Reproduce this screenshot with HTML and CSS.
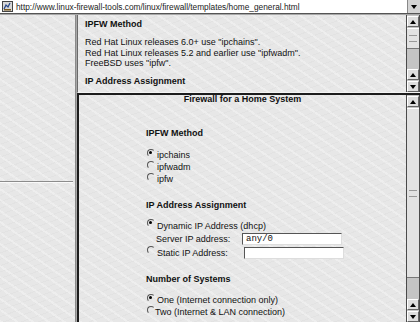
FILE: index.html
```html
<!DOCTYPE html>
<html lang="en">
<head>
  <meta charset="UTF-8" />
  <title>Firewall for a Home System</title>
  <link rel="stylesheet" href="styles.css">
</head>
<body>

  <div class="location">
    <span class="page-icon">
      <svg width="11" height="11" viewBox="0 0 11 11">
        <rect x="0.5" y="0.5" width="10" height="10" fill="#d8d8d8" stroke="#444"/>
        <path d="M2 8 L4 4 L6 6 L8 2" fill="none" stroke="#2a4a8a" stroke-width="1.3"/>
        <rect x="2" y="8" width="7" height="1.5" fill="#7a5a20"/>
      </svg>
    </span>
    <span class="url">http://www.linux-firewall-tools.com/linux/firewall/templates/home_general.html</span>
    <span class="drop"><span class="tri-down"></span></span>
  </div>

  <div class="frames">
    <div class="nav-frame">
      <div class="nav-top"></div>
      <div class="nav-rule"></div>
    </div>

    <div class="main-col">
      <div class="help-frame">
        <div class="help-body">
          <h3>IPFW Method</h3>
          <p>Red Hat Linux releases 6.0+ use "ipchains".<br>
             Red Hat Linux releases 5.2 and earlier use "ipfwadm".<br>
             FreeBSD uses "ipfw".</p>
          <h3>IP Address Assignment</h3>
        </div>
        <div class="scrollbar help-scroll">
          <div class="sbtn"><span class="tri-up"></span></div>
          <div class="thumb"><span class="grip"></span></div>
          <div class="track"></div>
          <div class="sbtn"><span class="tri-up"></span></div>
          <div class="sbtn"><span class="tri-down"></span></div>
        </div>
      </div>

      <div class="form-frame">
        <div class="form-body">
          <h2>Firewall for a Home System</h2>

          <div class="form-table">
            <h3 class="first">IPFW Method</h3>
            <div class="opts">
              <div class="row"><span class="radio on"></span>ipchains</div>
              <div class="row"><span class="radio"></span>ipfwadm</div>
              <div class="row"><span class="radio"></span>ipfw</div>
            </div>

            <h3>IP Address Assignment</h3>
            <div class="opts">
              <div class="row"><span class="radio on"></span>Dynamic IP Address (dhcp)</div>
              <div class="row field"><span class="lbl server">Server IP address:</span><span class="input">any/0</span></div>
              <div class="row field"><span class="radio"></span><span class="lbl static">Static IP Address:</span><span class="input"></span></div>
            </div>

            <h3>Number of Systems</h3>
            <div class="opts">
              <div class="row"><span class="radio on"></span>One (Internet connection only)</div>
              <div class="row"><span class="radio tight"></span>Two (Internet &amp; LAN connection)</div>
            </div>
          </div>
        </div>
        <div class="scrollbar form-scroll">
          <div class="sbtn"><span class="tri-up"></span></div>
          <div class="thumb"><span class="grip"></span></div>
          <div class="track"></div>
          <div class="sbtn"><span class="tri-up"></span></div>
          <div class="sbtn"><span class="tri-down"></span></div>
        </div>
      </div>
    </div>
  </div>

</body>
</html>
```

FILE: styles.css
```css
body {
  margin: 0;
  width: 420px;
  height: 322px;
  overflow: hidden;
  font-family: "Liberation Sans", Arial, sans-serif;
  font-size: 9px;
  color: #111;
  background: #a8a8a8;
}

/* marble-ish page background */
.nav-frame, .help-body, .form-body {
  background-color: #e7e7e7;
  background-image:
    repeating-linear-gradient(35deg, rgba(255,255,255,0.3) 0 2px, transparent 2px 9px),
    repeating-linear-gradient(-20deg, rgba(0,0,0,0.02) 0 1px, transparent 1px 6px);
}

.location {
  display: flex;
  align-items: center;
  height: 13px;
  background: #fff;
  border-bottom: 1px solid #555;
  margin-bottom: 1px;
}

.page-icon {
  width: 11px;
  height: 11px;
  margin: 0 3px 0 2px;
  display: flex;
}

.url {
  flex: 1;
  font-size: 8.3px;
  color: #222;
  white-space: nowrap;
}

.drop {
  width: 12px;
  height: 13px;
  background: #d4d4d4;
  border-left: 1px solid #888;
  display: flex;
  align-items: center;
  justify-content: center;
}

.frames {
  display: flex;
  height: 307px;
}

.nav-frame {
  width: 75px;
  border-right: 1px solid #8a8a8a;
  margin-right: 1px;
}

.nav-top {
  height: 166px;
}

.nav-rule {
  width: 73px;
  border-top: 1px solid #8c8c8c;
  border-bottom: 1px solid #fafafa;
}

.main-col {
  flex: 1;
  display: flex;
  flex-direction: column;
}

.help-frame {
  display: flex;
  height: 77px;
  border-left: 1px solid #6a6a6a;
  border-bottom: 1px solid #f4f4f4;
}

.help-body {
  flex: 1;
  padding: 4px 7px 0;
  line-height: 10.5px;
  overflow: hidden;
}

.help-body h3 {
  margin: 0;
  font-size: 9px;
}

.help-body p {
  margin: 7.5px 0;
}

.form-frame {
  flex: 1;
  display: flex;
  border-top: 2px solid #1c1c1c;
  border-left: 2px solid #1c1c1c;
}

.form-body {
  flex: 1;
  overflow: hidden;
}

.form-body h2 {
  margin: 0;
  font-size: 9px;
  line-height: 9px;
  text-align: center;
}

.form-table {
  padding-left: 67px;
}

.form-table h3 {
  margin: 14.5px 0 9px;
  font-size: 9px;
  line-height: 11px;
}

.form-table h3.first {
  margin-top: 23.5px;
  margin-bottom: 10.5px;
}

.row {
  display: flex;
  align-items: center;
  height: 12px;
  white-space: nowrap;
}

.row.field {
  height: 14px;
}

.radio {
  width: 6px;
  height: 6px;
  margin: -5px 2px 0 1px;
  border-radius: 50%;
  border-top: 1px solid #555;
  border-left: 1px solid #555;
  border-right: 1px solid transparent;
  border-bottom: 1px solid transparent;
  position: relative;
}

.radio.on::after {
  content: "";
  position: absolute;
  left: 1px;
  top: 1px;
  width: 3px;
  height: 3px;
  border-radius: 50%;
  background: #000;
}

.radio.tight {
  margin-right: 0;
}

.lbl.server {
  width: 86px;
  padding-left: 10px;
}

.lbl.static {
  width: 87px;
}

.input {
  width: 95px;
  height: 10px;
  background: #fff;
  border-top: 1px solid #555;
  border-left: 1px solid #555;
  border-right: 1px solid #ddd;
  border-bottom: 1px solid #ddd;
  font-family: "Liberation Mono", monospace;
  font-size: 9px;
  line-height: 10px;
  padding-left: 3px;
}

/* scrollbars */
.scrollbar {
  width: 12px;
  background: #c4c4c4;
  border-left: 1px solid #4a4a4a;
  border-right: 1px solid #4a4a4a;
  display: flex;
  flex-direction: column;
}

.sbtn {
  height: 9px;
  margin: 1px 0 0;
  background: #dedede;
  border-top: 1px solid #fff;
  border-left: 1px solid #fff;
  border-bottom: 1px solid #666;
  border-right: 1px solid #666;
  display: flex;
  align-items: center;
  justify-content: center;
}

.thumb {
  background: #e2e2e2;
  border-top: 1px solid #fff;
  border-bottom: 1px solid #777;
  display: flex;
  align-items: center;
  justify-content: center;
}

.grip {
  width: 8px;
  height: 5px;
  border-top: 1px solid #999;
  border-bottom: 1px solid #999;
}

.track {
  flex: 1;
}

.help-scroll .thumb { height: 19px; margin-top: 1px; }
.form-scroll .thumb { height: 168px; margin-top: 1px; }

.tri-up, .tri-down {
  width: 0;
  height: 0;
  border-left: 3px solid transparent;
  border-right: 3px solid transparent;
}

.tri-up { border-bottom: 4px solid #000; }
.tri-down { border-top: 4px solid #000; }
```
